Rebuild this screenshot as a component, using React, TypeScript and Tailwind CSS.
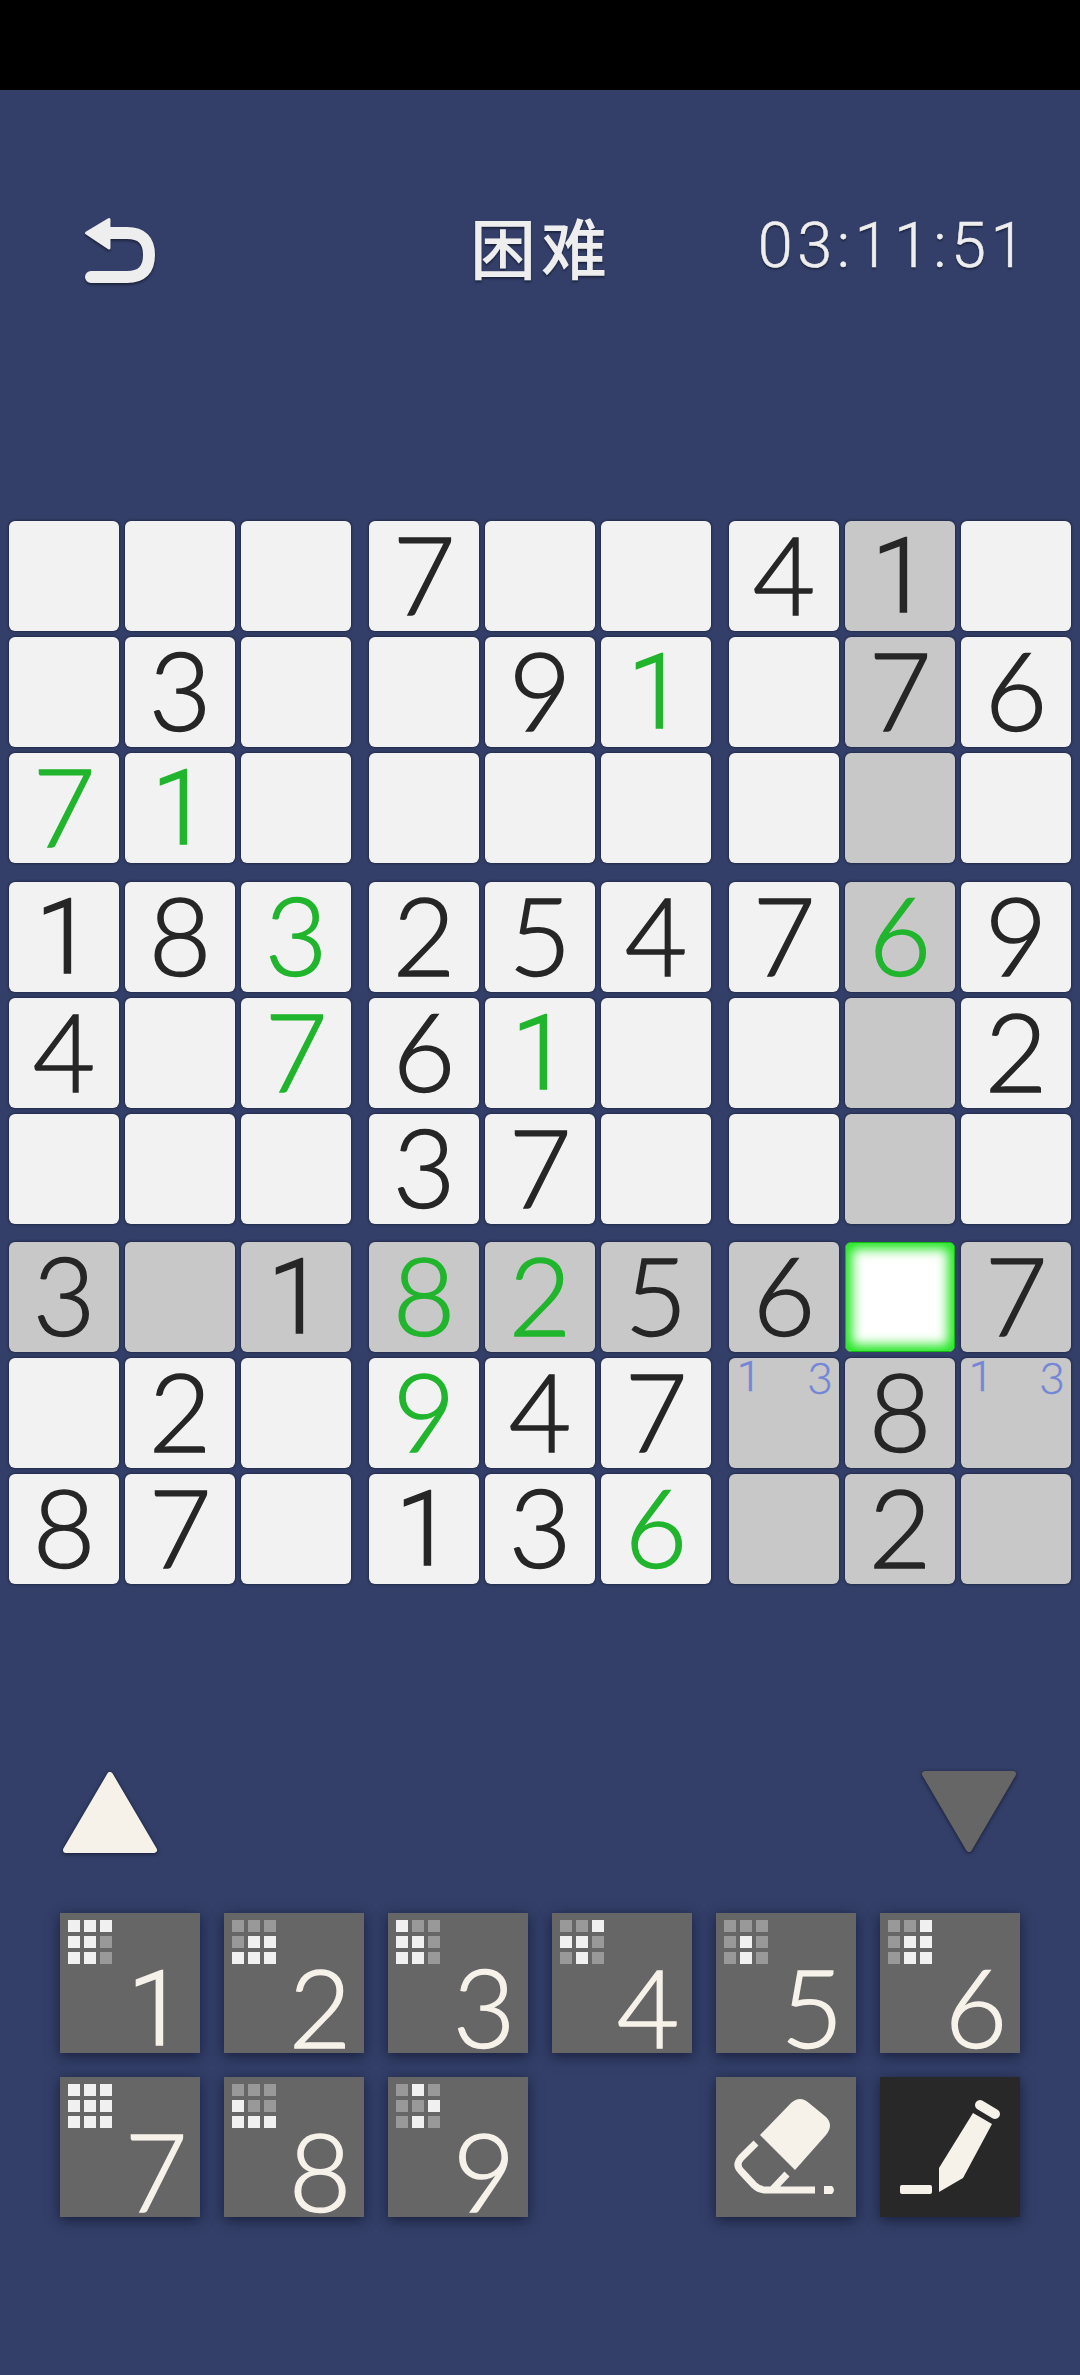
import type { ReactNode } from "react";

type Cell = { v?: string; green?: boolean; dim?: boolean; sel?: boolean; notes?: boolean };
const R = (s: string, greens: number[] = [], dims: number[] = [], notes: number[] = [], sel = -1): Cell[] =>
  s.split("").map((c, i) => ({
    v: c === "." ? undefined : c,
    green: greens.includes(i),
    dim: dims.includes(i),
    notes: notes.includes(i),
    sel: i === sel,
  }));

const rows: Cell[][] = [
  R("...7..41.", [], [7]),
  R(".3..91.76", [5], [7]),
  R("71.......", [0, 1], [7]),
  R("183254769", [2, 7], [7]),
  R("4.761...2", [2, 4], [7]),
  R("...37....", [], [7]),
  R("3.18256.7", [3, 4], [0, 1, 2, 3, 4, 5, 6, 8], [], 7),
  R(".2.947.8.", [3], [6, 7, 8], [6, 8]),
  R("87.136.2.", [5], [6, 7, 8]),
];

function Digit({ v, color }: { v: string; color: string }) {
  const one = v === "1";
  return (
    <span
      className={`leading-none font-light [-webkit-text-stroke:1.5px_currentColor] ${color} ${
        one ? "font-['Roboto',sans-serif] text-[103px]" : "font-['Lato',sans-serif] text-[108px] mb-[7px]"
      }`}
    >
      {v}
    </span>
  );
}

function Note({ v, left }: { v: string; left: string }) {
  return (
    <span
      className={`absolute top-0 ${left} w-[40px] h-[37px] flex items-center justify-center leading-none font-light text-[#7286d6] [-webkit-text-stroke:0.5px_currentColor] ${
        v === "1" ? "font-['Roboto',sans-serif] text-[43px]" : "font-['Lato',sans-serif] text-[44px]"
      }`}
    >
      {v}
    </span>
  );
}

function BoardCell({ c }: { c: Cell }) {
  if (c.sel) {
    return (
      <div className="w-[110px] h-[110px] rounded-[6px] bg-white border border-[#12b812] shadow-[inset_0_0_12px_6px_#1ee61e]" />
    );
  }
  return (
    <div
      className={`relative w-[110px] h-[110px] rounded-[6px] flex items-center justify-center shadow-[0_0_3px_#12182e] ${
        c.dim ? "bg-[#c8c8c8]" : "bg-[#f2f2f2]"
      }`}
    >
      {c.v && <Digit v={c.v} color={c.green ? "text-[#21b52e]" : "text-[#262626]"} />}
      {c.notes && (
        <>
          <Note v="1" left="left-0" />
          <Note v="3" left="left-[71px]" />
        </>
      )}
    </div>
  );
}

function Band({ r, className = "" }: { r: Cell[][]; className?: string }) {
  return (
    <div className={`flex flex-col gap-[6px] ${className}`}>
      {r.map((row, i) => (
        <div key={i} className="flex gap-[18px]">
          {[0, 3, 6].map((s) => (
            <div key={s} className="flex gap-[6px]">
              {row.slice(s, s + 3).map((c, j) => (
                <BoardCell key={j} c={c} />
              ))}
            </div>
          ))}
        </div>
      ))}
    </div>
  );
}

function Tile({ children, dark, className = "" }: { children: ReactNode; dark?: boolean; className?: string }) {
  return (
    <div
      className={`relative w-[140px] h-[140px] shadow-[0_3px_12px_rgba(15,20,45,0.75)] ${
        dark ? "bg-[#282828]" : "bg-[#666666]"
      } ${className}`}
    >
      {children}
    </div>
  );
}

function NumTile({ n, mask }: { n: number; mask: string }) {
  return (
    <Tile>
      <div className="pl-[8px] pt-[7px] grid grid-cols-[repeat(3,12px)] gap-[4px]">
        {mask.split("").map((m, i) => (
          <div key={i} className={`w-[12px] h-[12px] ${m === "1" ? "bg-[#f0f0f0]" : "bg-[#999999]"}`} />
        ))}
      </div>
      <div className="absolute left-[64px] top-[36px] w-[64px] h-[120px] flex items-center justify-center">
        <Digit v={String(n)} color="text-[#f6f2e9]" />
      </div>
    </Tile>
  );
}

const masks = ["111110110", "000011111", "100110110", "001110010", "000010010", "001011011", "111111111", "000100111", "010001010"];

export default function App() {
  return (
    <div className="w-[1080px] h-[2375px] bg-[#333f68] overflow-hidden">
      <div className="h-[90px] bg-black" />
      <div className="mt-[110px] h-[90px] pl-[85px] pr-[50px] flex items-center">
        <svg width="70" height="65" viewBox="0 0 70 65" fill="none" className="mt-[11px] overflow-visible drop-shadow-[0_2px_1px_#1d2540]">
          <path d="M1.5 15 L24 1.5 V30 Z" fill="#eeeeee" stroke="#eeeeee" strokeWidth="3" strokeLinejoin="round" />
          <path d="M24 15 H42 Q64 15 64 37 Q64 59 42 59 H6" stroke="#eeeeee" strokeWidth="12" strokeLinecap="round" />
        </svg>
        <span className="ml-[315px] font-['Noto_Sans_CJK_SC',sans-serif] font-medium text-[66px] tracking-[5px] leading-none text-[#eeeeee] [text-shadow:0_2px_2px_#1d2540]">
          困难
        </span>
        <span className="ml-auto font-['Roboto',sans-serif] font-light text-[63px] tracking-[4.5px] leading-none text-[#eeeeee] [-webkit-text-stroke:0.5px_currentColor] [text-shadow:0_2px_2px_#1d2540]">
          03:11:51
        </span>
      </div>
      <div className="mt-[231px] pl-[9px] flex flex-col gap-[18px]">
        <Band r={rows.slice(0, 3)} className="mb-[1px]" />
        <Band r={rows.slice(3, 6)} />
        <Band r={rows.slice(6, 9)} />
      </div>
      <div className="mt-[187px] flex justify-between pl-[63px] pr-[64px] h-[82px]">
        <svg width="94" height="82" viewBox="0 0 94 82" className="overflow-visible drop-shadow-[0_1px_2px_#161c33]">
          <path d="M47 4 L91 79 H3 Z" fill="#f6f2e9" stroke="#f6f2e9" strokeWidth="6" strokeLinejoin="round" />
        </svg>
        <svg width="94" height="82" viewBox="0 0 94 82" className="overflow-visible drop-shadow-[0_1px_2px_#161c33]">
          <path d="M3 3 H91 L47 78 Z" fill="#666666" stroke="#666666" strokeWidth="6" strokeLinejoin="round" />
        </svg>
      </div>
      <div className="mt-[60px] pl-[60px] grid grid-cols-[repeat(6,140px)] gap-[24px]">
        {masks.map((m, i) => (
          <NumTile key={i} n={i + 1} mask={m} />
        ))}
        <Tile className="col-start-5">
          <svg className="absolute inset-0" width="140" height="140" viewBox="0 0 140 140" fill="none">
            <path d="M44 58 L75 26 Q84 18 93 26 L110 40 Q118 48 110 58 L79 93 Z" fill="#f6f2e9" />
            <path d="M40 66 L25 81 Q19 88 25 94 L38 108 Q43 113 50 113 H99 M71 97 L56 113" stroke="#f6f2e9" strokeWidth="7" />
            <path d="M108 109 H116 Q120 113 116 117 H108 Z" fill="#f6f2e9" />
          </svg>
        </Tile>
        <Tile dark>
          <svg className="absolute inset-0" width="140" height="140" viewBox="0 0 140 140" fill="none">
            <path d="M93 36 L112 47 L83 101 L71 108 L59 115 V91 Z" fill="#f6f2e9" />
            <path d="M100 28 L115 37" stroke="#f6f2e9" strokeWidth="10" strokeLinecap="round" />
            <rect x="20" y="108" width="32" height="9" rx="2" fill="#f6f2e9" />
          </svg>
        </Tile>
      </div>
    </div>
  );
}
